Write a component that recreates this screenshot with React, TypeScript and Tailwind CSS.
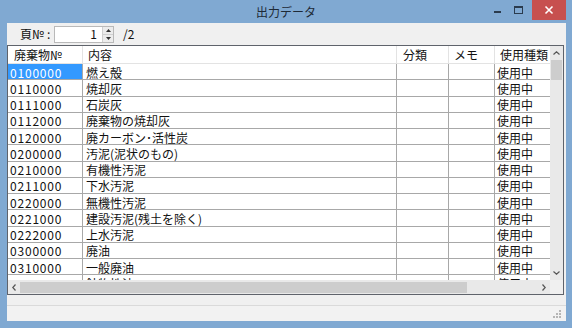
import React from "react";

const rows: [string, string][] = [
  ["0100000", "燃え殻"],
  ["0110000", "焼却灰"],
  ["0111000", "石炭灰"],
  ["0112000", "廃棄物の焼却灰"],
  ["0120000", "廃カーボン･活性炭"],
  ["0200000", "汚泥(泥状のもの)"],
  ["0210000", "有機性汚泥"],
  ["0211000", "下水汚泥"],
  ["0220000", "無機性汚泥"],
  ["0221000", "建設汚泥(残土を除く)"],
  ["0222000", "上水汚泥"],
  ["0300000", "廃油"],
  ["0310000", "一般廃油"],
  ["0311000", "鉱物性油"],
];

const font = { fontFamily: '"Noto Sans CJK JP", "Noto Sans", sans-serif' };

export default function App() {
  return (
    <div
      className="w-[572px] h-[328px] bg-[#80a9d2] flex flex-col overflow-hidden text-[12px] text-[#111] leading-none"
      style={font}
    >
      {/* Title bar */}
      <div className="h-[23px] flex items-start relative shrink-0">
        <div className="flex-1 h-[23px] flex items-center justify-center text-[12px] text-[#1e2a36] pt-[1px]">
          出力データ
        </div>
        <div className="absolute right-[6px] top-0 flex items-start">
          <div className="w-[20px] h-[20px] flex items-center justify-center">
            <svg width="10" height="10" viewBox="0 0 10 10">
              <rect x="1" y="6" width="7" height="2" fill="#2a3b4e" />
            </svg>
          </div>
          <div className="w-[20px] h-[20px] flex items-center justify-center mr-[4px]">
            <svg width="10" height="10" viewBox="0 0 10 10">
              <rect x="1.5" y="1.5" width="8" height="7" fill="none" stroke="#2a3b4e" strokeWidth="1" />
              <rect x="1" y="1" width="9" height="2" fill="#2a3b4e" />
            </svg>
          </div>
          <div className="w-[34px] h-[20px] bg-[#c7504f] flex items-center justify-center">
            <svg width="10" height="10" viewBox="0 0 10 10">
              <path d="M1.5 1.5 L8.5 8.5 M8.5 1.5 L1.5 8.5" stroke="#fff" strokeWidth="1.6" />
            </svg>
          </div>
        </div>
      </div>

      {/* Body with frame */}
      <div className="flex-1 flex pl-[7px] pr-[6px] min-h-0">
        <div className="flex-1 bg-[#f0f0f0] flex flex-col min-w-0">
          {/* Toolbar */}
          <div className="h-[22px] flex items-center pl-[13px] shrink-0 whitespace-nowrap">
            <div className="w-[34px] shrink-0 flex items-center text-[12px]">
              <span>頁№</span>
              <span className="ml-[3px]">:</span>
            </div>
            <div className="w-[60px] h-[17px] shrink-0 bg-white border border-[#b9b9b9] flex items-center">
              <div className="flex-1 text-right pr-[5px] text-[12px]">1</div>
              <div className="w-[11px] h-full flex flex-col border-l border-[#d0d0d0] bg-[#ececec]">
                <div className="flex-1 flex items-center justify-center border-b border-[#d0d0d0]">
                  <svg width="5" height="3" viewBox="0 0 5 3">
                    <path d="M0 3 L2.5 0 L5 3 Z" fill="#333" />
                  </svg>
                </div>
                <div className="flex-1 flex items-center justify-center">
                  <svg width="5" height="3" viewBox="0 0 5 3">
                    <path d="M0 0 L2.5 3 L5 0 Z" fill="#333" />
                  </svg>
                </div>
              </div>
            </div>
            <div className="ml-[9px] text-[12px]">/2</div>
          </div>

          {/* Table */}
          <div className="h-[250px] mr-[2px] border border-[#5f636b] bg-white flex flex-col shrink-0">
            <div className="flex-1 flex min-h-0">
              <div className="flex-1 overflow-hidden min-w-0">
                {/* Header */}
                <div className="h-[18px] flex border-b border-[#e3e3e3] bg-white whitespace-nowrap">
                  <div className="w-[75px] shrink-0 pl-[6px] flex items-center border-r border-[#e3e3e3]">
                    廃棄物№
                  </div>
                  <div className="w-[314px] shrink-0 pl-[5px] flex items-center border-r border-[#e3e3e3]">
                    内容
                  </div>
                  <div className="w-[52px] shrink-0 pl-[6px] flex items-center border-r border-[#e3e3e3]">
                    分類
                  </div>
                  <div className="w-[46px] shrink-0 pl-[5px] flex items-center border-r border-[#e3e3e3]">
                    メモ
                  </div>
                  <div className="w-[80px] shrink-0 pl-[5px] flex items-center">使用種類</div>
                </div>
                {rows.map(([code, name], i) => (
                  <div key={code} className="h-[16.25px] flex border-b border-[#a8a8a8] whitespace-nowrap">
                    <div
                      className={
                        i === 0
                          ? "w-[75px] shrink-0 pl-[2px] pt-[2px] flex items-center tracking-[0.8px] bg-[#3399ff] text-white border-r border-[#a8a8a8]"
                          : "w-[75px] shrink-0 pl-[2px] pt-[2px] flex items-center tracking-[0.8px] border-r border-[#a8a8a8]"
                      }
                    >
                      {code}
                    </div>
                    <div className="w-[314px] shrink-0 pl-[3px] pt-[2px] flex items-center border-r border-[#a8a8a8]">
                      {name}
                    </div>
                    <div className="w-[52px] shrink-0 border-r border-[#a8a8a8]" />
                    <div className="w-[46px] shrink-0 border-r border-[#a8a8a8]" />
                    <div className="w-[80px] shrink-0 pl-[2px] pt-[2px] flex items-center">使用中</div>
                  </div>
                ))}
              </div>
              {/* Vertical scrollbar */}
              <div className="w-[13px] bg-[#e9e9e9] flex flex-col shrink-0">
                <div className="h-[14px] flex items-center justify-center">
                  <svg width="7" height="4" viewBox="0 0 7 4">
                    <path d="M0.5 3.5 L3.5 0.8 L6.5 3.5" fill="none" stroke="#555" strokeWidth="1.2" />
                  </svg>
                </div>
                <div className="h-[20px] mx-[1px] bg-[#cdcdcd]" />
                <div className="flex-1" />
                <div className="h-[14px] flex items-center justify-center">
                  <svg width="7" height="4" viewBox="0 0 7 4">
                    <path d="M0.5 0.5 L3.5 3.2 L6.5 0.5" fill="none" stroke="#555" strokeWidth="1.2" />
                  </svg>
                </div>
              </div>
            </div>
            {/* Horizontal scrollbar */}
            <div className="h-[14px] flex shrink-0">
              <div className="flex-1 bg-[#e9e9e9] flex items-center">
                <div className="w-[12px] h-full flex items-center justify-center">
                  <svg width="4" height="7" viewBox="0 0 4 7">
                    <path d="M3.5 0.5 L0.8 3.5 L3.5 6.5" fill="none" stroke="#555" strokeWidth="1.2" />
                  </svg>
                </div>
                <div className="w-[447px] h-[11px] bg-[#cdcdcd]" />
                <div className="flex-1" />
                <div className="w-[12px] h-full flex items-center justify-center">
                  <svg width="4" height="7" viewBox="0 0 4 7">
                    <path d="M0.5 0.5 L3.2 3.5 L0.5 6.5" fill="none" stroke="#555" strokeWidth="1.2" />
                  </svg>
                </div>
              </div>
              <div className="w-[13px] bg-[#f0f0f0]" />
            </div>
          </div>

          {/* Status area */}
          <div className="flex-1 flex flex-col">
            <div className="h-[10px]" />
            <div className="flex-1 border-t border-[#dadada] bg-[#f2f2f2] flex items-end justify-end pr-[4px] pb-[2px]">
              <svg width="10" height="10" viewBox="0 0 10 10">
                <rect x="7" y="1" width="2" height="2" fill="#b5b5b5" />
                <rect x="4" y="4" width="2" height="2" fill="#b5b5b5" />
                <rect x="7" y="4" width="2" height="2" fill="#b5b5b5" />
                <rect x="1" y="7" width="2" height="2" fill="#b5b5b5" />
                <rect x="4" y="7" width="2" height="2" fill="#b5b5b5" />
                <rect x="7" y="7" width="2" height="2" fill="#b5b5b5" />
              </svg>
            </div>
          </div>
        </div>
      </div>
      <div className="h-[7px] shrink-0" />
    </div>
  );
}
